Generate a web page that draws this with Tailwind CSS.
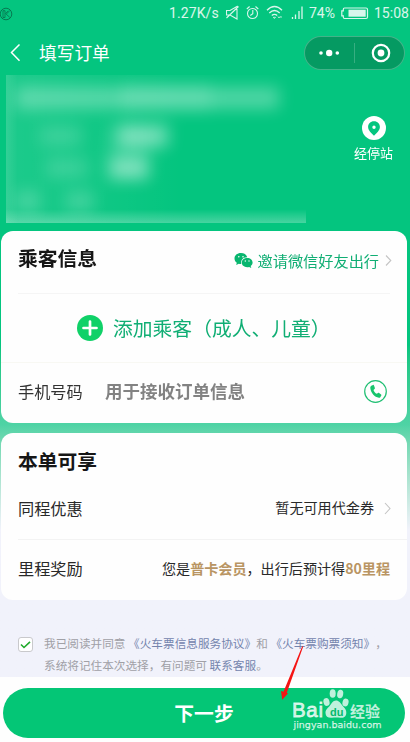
<!DOCTYPE html>
<html lang="zh-CN">
<head>
<meta charset="utf-8">
<title>填写订单</title>
<script src="https://cdn.jsdelivr.net/npm/@tailwindcss/browser@4"></script>
</head>
<body class="w-[410px] h-[742px] overflow-hidden bg-white font-['Noto_Sans_CJK_SC',sans-serif] whitespace-nowrap [text-spacing-trim:space-all]">
<div class="relative w-[410px] h-[742px] flex flex-col overflow-hidden">
  <div class="h-[677px] flex flex-col bg-linear-to-b from-[#04c57f] from-[345px] via-[#4fd3a5] via-[425px] to-[#f1f2fb] to-[530px]">
    <!-- status bar -->
    <div class="h-[27px] shrink-0 flex items-center text-white/85 font-[Roboto,sans-serif] text-[14px] leading-[27px]">
      <svg class="w-[13px] h-[14px] text-[#08714c] shrink-0" viewBox="0 0 13 14" fill="none" stroke="currentColor"><circle cx="6" cy="7" r="5.8" stroke-width=".9"/><path d="M3 3.700h2v6.800H3zM9.700 3.800 6.200 7.200l3.600 3.200M8.300 3.800 5.300 6.800" stroke-width=".8"/></svg>
      <span class="ml-[156px] w-[57px] text-[14px] tracking-[.1px]">1.27K/s</span>
      <svg class="w-[83px] h-[27px] shrink-0" viewBox="226 0 83 27" fill="none" stroke="currentColor" stroke-width="1.100">
        <path d="M226.500 10.500h3.500l7-4v12.500l-7-4h-3.500zM226.500 18l12-11.500"/>
        <circle cx="252.500" cy="13.500" r="5"/><path d="M252.800 10v3.700l-2.500 1.800M246.800 9l2.800-2.500M255.500 6.500l2.800 2.500"/>
        <path d="M267 10.200q7.500-7.400 15 0M269.300 13q5.200-5 10.400 0M271.800 15.600q2.700-2.500 5.400 0" stroke-width="1.300"/><path d="M273.300 17.300h2.200l-1.100 1.200zM278 16.500l1 1.500 1-1.500M281 18v-2" stroke-width=".8"/>
        <path d="M292.500 17v2M295.500 14.500V19M299 11v8M302 6.500V19" stroke-width="1.300"/>
      </svg>
      <span class="w-[32px] text-[14px]">74%</span>
      <svg class="w-[29px] h-[14px] shrink-0" viewBox="341 6.500 29 14" fill="none" stroke="currentColor"><path d="M344.500 7.500h21.500q1.500 0 1.500 1.500v7.500q0 1.500-1.500 1.500h-21.500q-1.200 0-1.200-1.500v-1.200h-1.500v-5h1.500V9q0-1.500 1.200-1.500z" stroke-width="1.200"/><path d="M348.500 9.200h17.200v7h-17.200z" fill="currentColor" stroke="none"/></svg>
      <span class="ml-[4px] text-[14px]">15:08</span>
    </div>
    <!-- navigation bar -->
    <div class="h-[48px] shrink-0 flex items-center pl-[9px] pr-[5px] text-white">
      <svg class="w-[13px] h-[20px] shrink-0 mt-1" viewBox="0 0 13 20" fill="none" stroke="currentColor" stroke-width="1.500"><path d="M10.500 1.500 2.500 9.500l8 8.200"/></svg>
      <span class="ml-[17px] mt-[1px] text-[17.700px] leading-6">填写订单</span>
      <div class="ml-auto mt-1 w-[101px] h-[34px] rounded-full border border-white/25 bg-[#059a62] flex items-center">
        <svg class="w-[99px] h-[32px]" viewBox="0 0 99 32" fill="currentColor"><circle cx="16" cy="16" r="1.800"/><circle cx="24.200" cy="16" r="3.200"/><circle cx="32.300" cy="16" r="1.800"/><path d="M49 6h1v20h-1z" opacity=".2"/><circle cx="76" cy="16" r="8.200" fill="none" stroke="currentColor" stroke-width="2.200"/><circle cx="76" cy="16" r="3.400"/></svg>
      </div>
    </div>
    <!-- trip summary, privacy-blurred -->
    <div class="h-[156px] shrink-0 flex items-start pl-[6px]">
      <svg class="w-[300px] h-[148px] shrink-0" viewBox="0 0 300 148">
        <defs>
          <filter id="b" x="-50%" y="-80%" width="200%" height="260%"><feGaussianBlur stdDeviation="8"/></filter>
          <linearGradient id="g"><stop stop-color="#fff" stop-opacity=".1"/><stop offset="1" stop-color="#fff" stop-opacity="0"/></linearGradient>
          <linearGradient id="v" x2="0" y2="1"><stop stop-color="#fff" stop-opacity="0"/><stop offset="1" stop-color="#fff" stop-opacity=".27"/></linearGradient>
        </defs>
        <path fill="url(#g)" d="M0 0h175v148H0z"/>
        <g fill="#fff" filter="url(#b)">
          <path opacity=".3" d="M10 12h263v22H10z"/><path opacity=".12" d="M115 8h90v28h-90z"/>
          <path opacity=".17" d="M34 51h42v20H34zM40 83h42v20H40z"/><path opacity=".42" d="M112 50h50v22h-50zM104 82h38v22h-38z"/>
          <path opacity=".2" d="M10 116h24v20H10zM60 116h28v20H60z"/>
          <path opacity=".1" d="M100 50h44v54h-44z"/>
        </g>
        <path fill="url(#v)" d="M0 134h300v14H0z"/><path fill="url(#g)" d="M0 0h12v148H0z"/>
      </svg>
      <div class="ml-[48px] mt-[41px] flex flex-col items-center text-white">
        <svg class="w-6 h-6" viewBox="0 0 24 24"><circle cx="12" cy="12" r="12" fill="#fff"/><path fill="#04c57f" fill-rule="evenodd" d="M12 5.200c-3.600 0-5.900 2.500-5.900 5.700 0 3.500 3.400 6 5.900 8.900 2.500-2.900 5.900-5.400 5.900-8.900 0-3.200-2.300-5.700-5.900-5.700m0 4.300a1.700 1.700 0 1 1 0 3.400 1.700 1.700 0 0 1 0-3.400"/></svg>
        <span class="mt-[3px] text-[13px] leading-5">经停站</span>
      </div>
    </div>
    <!-- passenger card -->
    <section class="ml-px w-[406px] h-[192px] shrink-0 rounded-[12px] bg-[#fefefe] flex flex-col">
      <div class="mx-[17px] h-[63px] shrink-0 border-b border-[#f5f5f5] flex items-start">
        <h2 class="mt-[14px] text-[19.800px] leading-[26px] font-bold text-[#161616]">乘客信息</h2>
        <div class="ml-auto mt-[16px] -mr-[3px] flex items-center text-[#10ae74]">
          <svg class="w-[19px] h-[16px]" viewBox="0 0 19 16"><path fill="#08b66f" d="M7 1C3 1 .5 3.400.500 6.500c0 1.800.9 3.300 2.300 4.300L2.200 13l2.600-1.300q1.200.4 2.400.3C6.500 8 9 5.100 13.300 5.200 12.500 2.600 10 1 7 1"/><path fill="#08b66f" d="M13.200 5.900c-3.100 0-5.500 2-5.500 4.700s2.400 4.600 5.500 4.600q1 0 1.900-.3l2.200 1.100-.6-2c1.200-.8 1.900-2 1.900-3.400 0-2.700-2.300-4.700-5.400-4.700"/><g fill="#fff"><circle cx="4.800" cy="4.700" r=".8"/><circle cx="9" cy="4.700" r=".8"/><circle cx="11.300" cy="9" r=".7"/><circle cx="15" cy="9" r=".7"/></g></svg>
          <span class="ml-[5px] text-[15.200px] leading-[26px]">邀请微信好友出行</span>
          <svg class="ml-[6px] mr-[1px] w-[7px] h-[12px]" viewBox="0 0 7 12" fill="none" stroke="#c4c4c4" stroke-width="1.100"><path d="m1 1.500 4.800 5L1 11.500"/></svg>
        </div>
      </div>
      <div class="h-[69px] shrink-0 border-b border-[#f8f8f3] flex items-center pl-[76px]">
        <svg class="w-[26px] h-[26px]" viewBox="0 0 26 26"><circle cx="13" cy="13" r="13" fill="#10d168"/><path d="M13 6.500v13M6.500 13h13" stroke="#fff" stroke-width="2.700" stroke-linecap="round"/></svg>
        <span class="ml-[10px] text-[19.800px] leading-7 text-[#10ae74]">添加乘客（成人、儿童）</span>
      </div>
      <div class="h-[60px] pb-[3px] flex items-center pl-[17px] pr-[20px]">
        <span class="w-[87px] text-[16.200px] text-[#333]">手机号码</span>
        <span class="text-[17.500px] font-bold text-[#828282]">用于接收订单信息</span>
        <svg class="ml-auto w-[23px] h-[23px]" viewBox="0 0 23 23"><circle cx="11.500" cy="11.500" r="10.800" fill="none" stroke="#20bf73" stroke-width="1.200"/><path fill="#18c56c" d="M7.300 5.700 9 4.900c.5-.1.800.1 1 .5l.9 2.600c.1.500 0 .8-.4 1.100l-1 .8c.6 1.700 1.700 3 3.300 3.900l1.200-.9c.4-.2.700-.2 1.100 0l2 1.500c.4.300.4.700.2 1.100l-1 1.700c-.3.500-.8.700-1.400.6C10.500 17 6.800 13 6.300 8c0-1 .2-1.800 1-2.300"/></svg>
      </div>
    </section>
    <!-- benefits card -->
    <section class="mt-[10px] ml-px w-[406px] h-[167px] shrink-0 rounded-[12px] bg-[#fefefe] flex flex-col">
      <h2 class="ml-[17px] mt-[15px] text-[19.800px] leading-[26px] font-bold text-[#161616]">本单可享</h2>
      <div class="mt-[3px] ml-[17px] pr-[16px] h-[63px] shrink-0 border-b border-[#f3f3f3] flex items-center text-[#292929]">
        <span class="text-[16.200px]">同程优惠</span>
        <span class="ml-auto text-[14.100px]">暂无可用代金券</span>
        <svg class="ml-[10px] w-[7px] h-[13px]" viewBox="0 0 7 13" fill="none" stroke="#c4c4c4" stroke-width="1.100"><path d="m1 1 5 5.500L1 12"/></svg>
      </div>
      <div class="h-[57px] shrink-0 px-[17px] flex items-center text-[#292929]">
        <span class="text-[16.200px]">里程奖励</span>
        <span class="ml-auto text-[14.100px]">您是<b class="font-bold text-[#b99563]">普卡会员</b>，出行后预计得<b class="font-bold text-[#b99563]">80里程</b></span>
      </div>
    </section>
    <!-- agreement -->
    <div class="mt-[32px] pl-[18px] flex items-start text-[11.650px] leading-[22px] text-[#a0a0a6]">
      <svg class="mt-[5px] w-[15px] h-[15px] shrink-0" viewBox="0 0 15 15" fill="none"><rect x=".5" y=".5" width="14" height="14" rx="2.500" fill="#fff" stroke="#c9c9cc"/><path d="m3 7.500 3 3L12 4.800" stroke="#1faa2b" stroke-width="1.600"/></svg>
      <div class="ml-[11px]">
        <div>我已阅读并同意 <span class="text-[#7484ad]">《火车票信息服务协议》</span>和 <span class="text-[#7484ad]">《火车票购票须知》</span>，</div>
        <div>系统将记住本次选择，有问题可 <span class="text-[#7484ad]">联系客服</span>。</div>
      </div>
    </div>
  </div>
  <!-- submit bar -->
  <div class="h-[65px] pt-[11px] pl-[3px] bg-[#fefefe]">
    <button class="w-[402px] h-[50px] rounded-full bg-[#04c676] text-white text-[19.800px] leading-[50px] font-bold">下一步</button>
  </div>
  <!-- watermark and pointer -->
  <div class="absolute left-[293px] top-[687px] w-[92px] h-[46px] text-white/75">
    <svg class="w-[92px] h-[46px]" viewBox="0 0 92 46" fill="currentColor">
      <text x="-1" y="29.500" font-family="Liberation Sans, sans-serif" font-size="20.500" textLength="31" stroke="currentColor" stroke-width=".8">Bai</text>
      <ellipse cx="33.500" cy="15" rx="3" ry="4" transform="rotate(-15 33.500 15)"/><ellipse cx="39.700" cy="6.500" rx="3" ry="4.300"/><ellipse cx="47.200" cy="7" rx="3" ry="4.300" transform="rotate(10 47.200 7)"/><ellipse cx="52.500" cy="15.500" rx="3" ry="4" transform="rotate(15 52.500 15.500)"/>
      <path d="M43 13.500c3 0 4.500 2.500 6 4.600 2 2.500 4.500 4.500 4.300 7.800-.2 4-3.200 5.300-6 4.900-3-.4-5.500-.4-8.500 0-3.500.4-6.200-1.200-6.300-4.800-.1-3.500 2.500-5 4.500-7.500 1.500-2 3-5 6-5"/>
      <text x="37" y="28.500" fill="#04b96d" font-family="Liberation Sans, sans-serif" font-size="11" font-weight="700">du</text>
      <text x="57" y="29.500" font-family="Noto Sans CJK SC, sans-serif" font-size="15" font-weight="700">经验</text>
      <text x="0.500" y="40.500" font-family="DejaVu Sans, sans-serif" font-size="9.500" textLength="88" stroke="currentColor" stroke-width=".25">jingyan.baidu.com</text>
    </svg>
  </div>
  <svg class="absolute left-[278px] top-[645px] w-[28px] h-[56px]" viewBox="0 0 28 56" fill="#f51414"><path d="M24.200 1.200 25.200 1.600 8.800 47.800 10 48.400 4.200 54.800 3 46 5.500 46.800z"/></svg>
</div>
</body>
</html>
